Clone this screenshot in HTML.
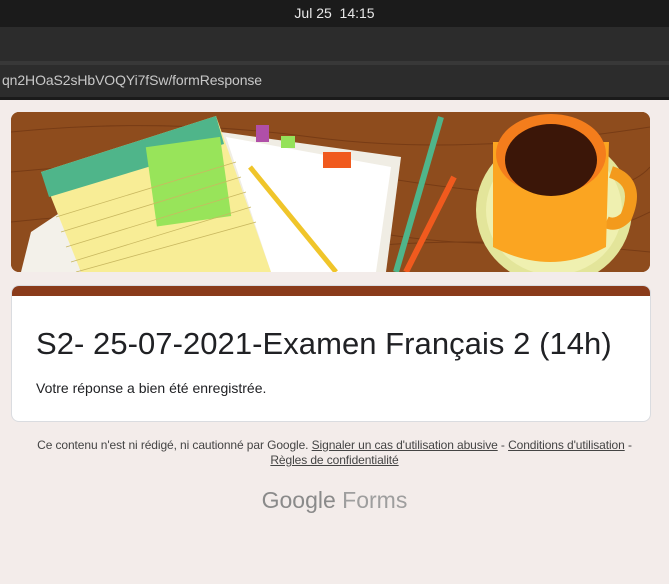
<!DOCTYPE html>
<html><head><meta charset="utf-8"><style>
*{margin:0;padding:0;box-sizing:border-box}
body{width:669px;height:584px;background:#f3ecea;font-family:"Liberation Sans",sans-serif;position:relative;overflow:hidden}
.top{position:absolute;left:0;top:0;width:669px;height:27px;background:#1b1b1b;color:#e8e8e8;font-size:14px;text-align:center;line-height:27px}
.tool{position:absolute;left:0;top:27px;width:669px;height:34px;background:#2c2c2c}
.url{position:absolute;left:0;top:61px;width:669px;height:37px;background:#2c2c2c;border-top:4px solid #383838;color:#c8c8c8;font-size:14px;line-height:30px;padding-left:2px;letter-spacing:-0.1px}
.url:after{content:"";position:absolute;left:0;right:0;bottom:-2px;height:3px;background:#1a1a1a}
.banner{position:absolute;left:11px;top:112px;width:639px;height:160px;border-radius:8px;overflow:hidden;background:#8a4a1c}
.card{position:absolute;left:11px;top:285px;width:640px;height:137px;background:#fff;border-radius:8px;border:1px solid #dadce0;overflow:hidden}
.card .bar{height:10px;background:#8a3b1a}
h1{font-weight:400;font-size:31px;color:#202124;position:absolute;left:24px;top:40px;letter-spacing:0.05px}
.card p{position:absolute;left:24px;top:94px;font-size:14px;color:#202124}
.foot{position:absolute;left:0;width:669px;top:438px;text-align:center;font-size:12px;color:#444;line-height:15px;letter-spacing:-0.1px}
.foot u{color:#444}
.gf{position:absolute;left:0;width:669px;top:487px;text-align:center;font-size:23px;color:#9e9e9e}
.gf b{color:#8a8a8a;font-weight:400}
</style></head><body>
<div class="top">Jul 25&nbsp; 14:15</div>
<div class="tool"></div>
<div class="url">qn2HOaS2sHbVOQYi7fSw/formResponse</div>
<div class="banner">
<svg width="639" height="160" viewBox="0 0 639 160">
<rect width="639" height="160" fill="#8e4c1d"/>
<g stroke="#6e3512" stroke-width="1" fill="none" opacity=".7">
<path d="M0 20 Q150 5 300 25 T639 15"/><path d="M0 60 Q200 40 400 70 T639 55"/><path d="M0 110 Q180 90 360 120 T639 100"/><path d="M300 140 Q450 120 639 140"/></g>
<polygon points="20,120 50,100 70,160 10,160" fill="#f3f1ea"/>
<polygon points="210,20 390,45 375,160 250,160" fill="#f0ede4"/>
<polygon points="215,25 380,55 365,160 260,160" fill="#fff"/>
<rect x="245" y="13" width="13" height="17" fill="#b04fa8"/>
<rect x="270" y="24" width="14" height="12" fill="#95e25a"/>
<rect x="312" y="40" width="28" height="16" fill="#f05a1e"/>
<line x1="239" y1="55" x2="325" y2="160" stroke="#f0c52a" stroke-width="5"/>
<polygon points="30,60 205,4 260,160 70,160" fill="#f8ed96"/>
<polygon points="30,60 205,4 213,32 38,85" fill="#4fb58a"/>
<rect x="140" y="30" width="75" height="80" fill="#98e45a" transform="rotate(-8 175 70)"/>
<g stroke="#c9b860" stroke-width=".8">
<line x1="45" y1="105" x2="225" y2="50"/><line x1="50" y1="120" x2="230" y2="65"/><line x1="55" y1="135" x2="235" y2="80"/><line x1="60" y1="150" x2="240" y2="95"/><line x1="65" y1="160" x2="245" y2="110"/></g>
<line x1="430" y1="5" x2="385" y2="160" stroke="#4fb58a" stroke-width="6"/>
<line x1="443" y1="65" x2="395" y2="160" stroke="#f05a1e" stroke-width="6"/>
<ellipse cx="543" cy="98" rx="78" ry="75" fill="#e3e59a"/>
<ellipse cx="543" cy="98" rx="68" ry="65" fill="#eff0b0"/>
<path d="M600 60 q30 10 15 45 q-10 10 -20 5" stroke="#f39a1c" stroke-width="12" fill="none"/>
<path d="M482 30 L482 135 Q540 165 595 135 L598 30 Z" fill="#fba521"/>
<ellipse cx="540" cy="42" rx="55" ry="40" fill="#f47d1c"/>
<ellipse cx="540" cy="48" rx="46" ry="36" fill="#3b1608"/>
</svg>
</div>
<div class="card"><div class="bar"></div>
<h1>S2- 25-07-2021-Examen Français 2 (14h)</h1>
<p>Votre réponse a bien été enregistrée.</p></div>
<div class="foot">Ce contenu n'est ni rédigé, ni cautionné par Google. <u>Signaler un cas d'utilisation abusive</u> - <u>Conditions d'utilisation</u> -<br><u>Règles de confidentialité</u></div>
<div class="gf"><b>Google</b> Forms</div>
</body></html>
